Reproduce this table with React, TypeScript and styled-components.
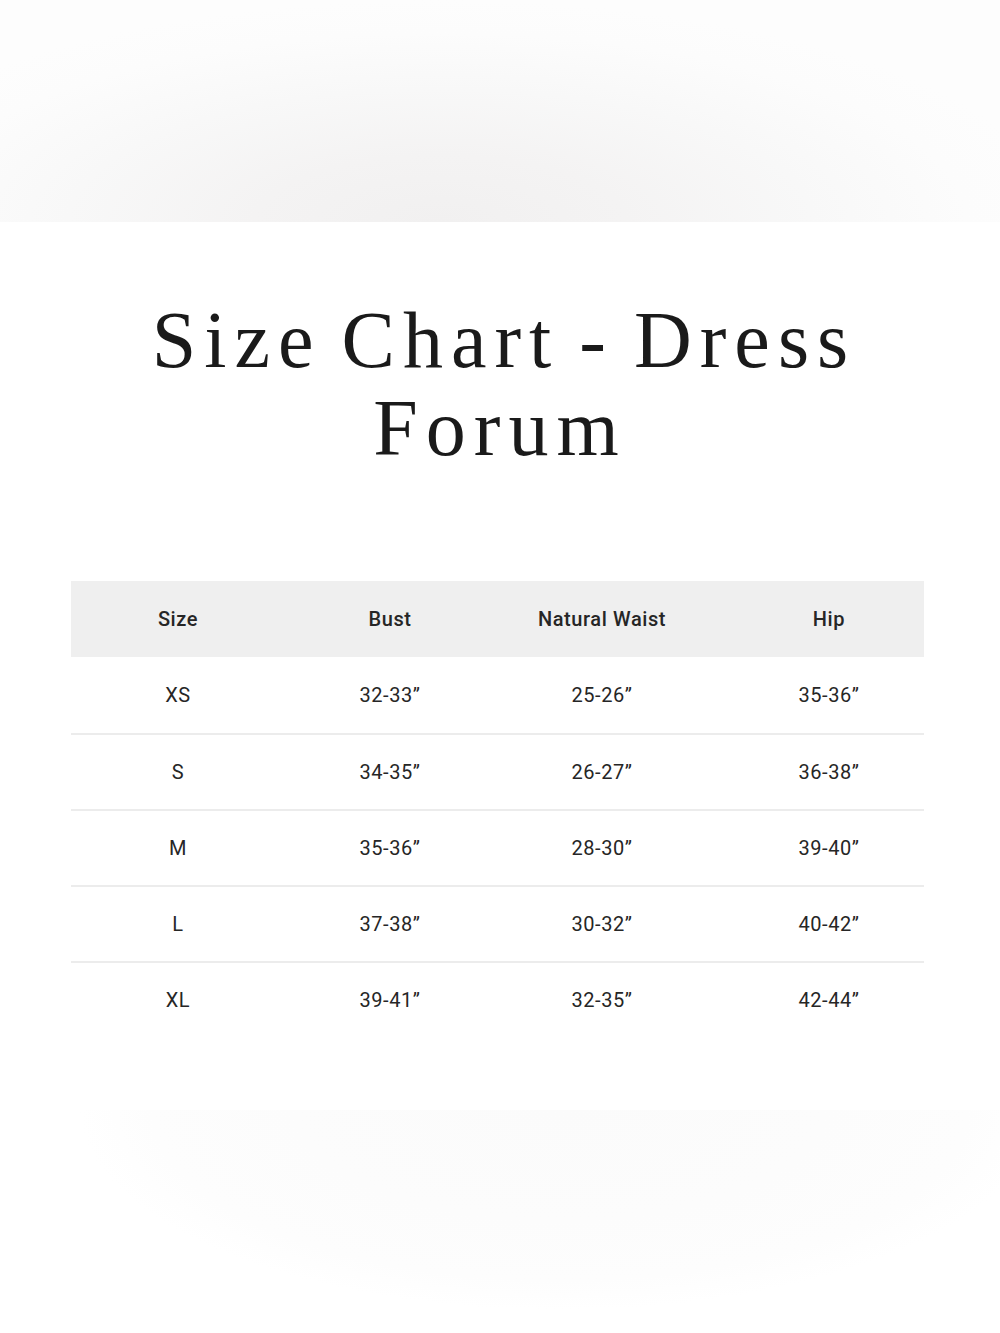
import * as React from 'react';
import styled, { createGlobalStyle } from 'styled-components';

const GlobalStyle = createGlobalStyle`
  html, body {
    margin: 0;
    padding: 0;
    background: #ffffff;
  }
`;

const columns = ['Size', 'Bust', 'Natural Waist', 'Hip'];

const rows = [
  ['XS', '32-33”', '25-26”', '35-36”'],
  ['S', '34-35”', '26-27”', '36-38”'],
  ['M', '35-36”', '28-30”', '39-40”'],
  ['L', '37-38”', '30-32”', '40-42”'],
  ['XL', '39-41”', '32-35”', '42-44”'],
];

export default function App() {
  return (
    <Page>
      <GlobalStyle />
      <TopGlow />
      <Title>
        Size Chart - Dress
        <br />
        Forum
      </Title>
      <Table>
        <Row $head>
          {columns.map((c) => (
            <Cell key={c} $head>
              {c}
            </Cell>
          ))}
        </Row>
        {rows.map((r, i) => (
          <Row key={r[0]} $divider={i > 0}>
            {r.map((v, j) => (
              <Cell key={j}>{v}</Cell>
            ))}
          </Row>
        ))}
      </Table>
      <BottomGlow />
    </Page>
  );
}

const Page = styled.div`
  width: 1000px;
  height: 1333px;
  overflow: hidden;
  display: flex;
  flex-direction: column;
  align-items: center;
  background: #ffffff;
`;

const TopGlow = styled.div`
  align-self: stretch;
  height: 222px;
  flex-shrink: 0;
  background: radial-gradient(
    ellipse 62% 100% at 44% 100%,
    #f1f0f0 0%,
    #f4f3f3 30%,
    #f8f8f8 60%,
    #fcfcfc 85%,
    #fdfdfd 100%
  );
`;

const Title = styled.h1`
  margin: 74px 0 0;
  font-family: 'Liberation Serif', 'Times New Roman', serif;
  font-weight: 400;
  font-size: 80px;
  line-height: 88px;
  letter-spacing: 8px;
  word-spacing: -8px;
  text-indent: 8px;
  color: #1a1a1a;
  text-align: center;
`;

const Table = styled.div`
  margin-top: 109px;
  width: 853px;
  margin-left: -5px;
  display: flex;
  flex-direction: column;
`;

const Row = styled.div<{ $head?: boolean; $divider?: boolean }>`
  display: grid;
  grid-template-columns: 214px 210px 214px 1fr;
  height: 76px;
  box-sizing: border-box;
  background: ${(p) => (p.$head ? '#efefef' : '#ffffff')};
  border-top: ${(p) => (p.$divider ? '2px solid #ececec' : 'none')};
`;

const Cell = styled.div<{ $head?: boolean }>`
  display: flex;
  align-items: center;
  justify-content: center;
  font-family: Roboto, 'Liberation Sans', Arial, sans-serif;
  font-size: 20px;
  font-weight: ${(p) => (p.$head ? 500 : 400)};
  letter-spacing: 0.6px;
  color: #262626;

  &:last-child {
    padding-left: 25px;
  }
`;

const BottomGlow = styled.div`
  margin-top: 73px;
  align-self: stretch;
  height: 200px;
  flex-shrink: 0;
  background: radial-gradient(
    ellipse 48% 100% at 56% 0%,
    #fbfbfb 0%,
    #fcfcfc 55%,
    #fdfdfd 85%,
    #ffffff 100%
  );
`;
